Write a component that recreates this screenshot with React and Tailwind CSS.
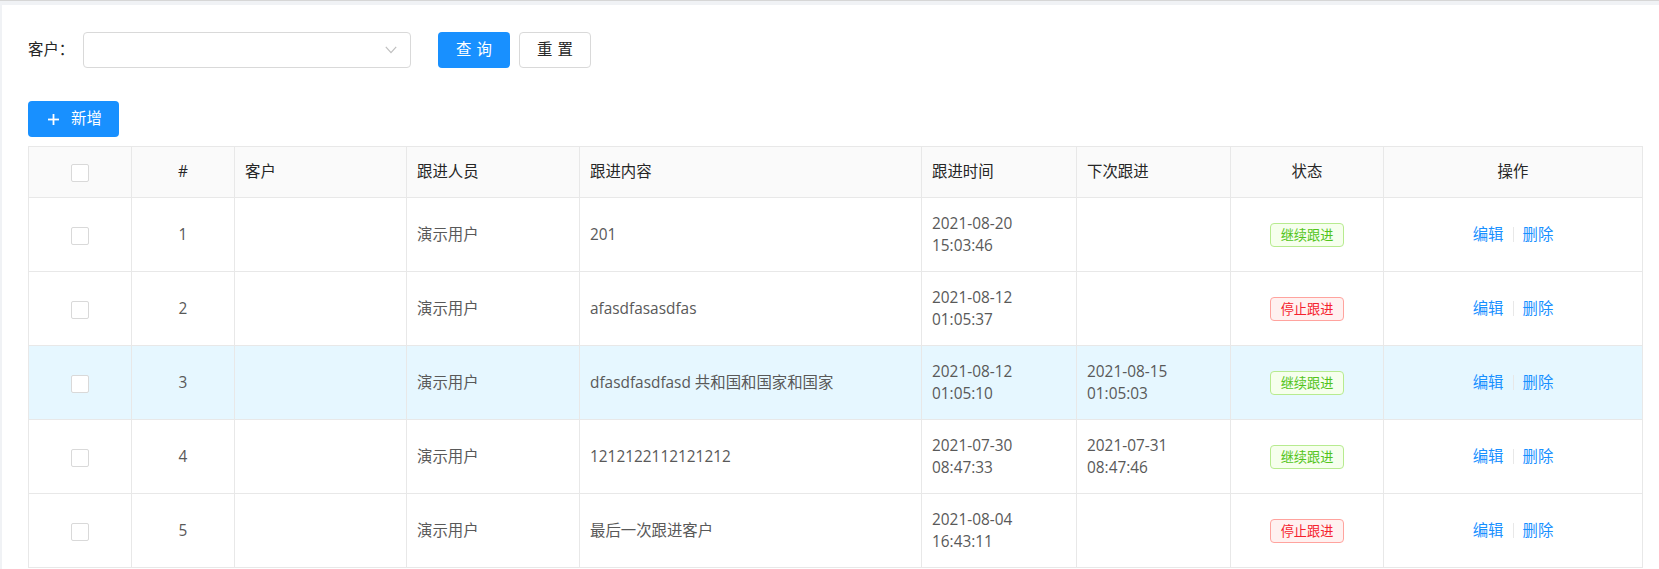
import React from "react";

const rows = [
  { id: 1, user: "演示用户", content: "201", time: ["2021-08-20", "15:03:46"], next: null, stop: false },
  { id: 2, user: "演示用户", content: "afasdfasasdfas", time: ["2021-08-12", "01:05:37"], next: null, stop: true },
  { id: 3, user: "演示用户", content: "dfasdfasdfasd 共和国和国家和国家", time: ["2021-08-12", "01:05:10"], next: ["2021-08-15", "01:05:03"], stop: false, active: true },
  { id: 4, user: "演示用户", content: "1212122112121212", time: ["2021-07-30", "08:47:33"], next: ["2021-07-31", "08:47:46"], stop: false },
  { id: 5, user: "演示用户", content: "最后一次跟进客户", time: ["2021-08-04", "16:43:11"], next: null, stop: true },
];

function Checkbox() {
  return <span className="inline-block w-[18px] h-[18px] rounded-[2px] border border-[#d9d9d9] bg-white align-middle" />;
}

function Tag({ stop }) {
  if (stop) {
    return (
      <span className="inline-block h-[24px] px-[10px] leading-[22px] text-[13.2px] rounded-[4px] border border-[#ffa39e] bg-[#fff1f0] text-[#f5222d]">
        停止跟进
      </span>
    );
  }
  return (
    <span className="inline-block h-[24px] px-[10px] leading-[22px] text-[13.2px] rounded-[4px] border border-[#b7eb8f] bg-[#f6ffed] text-[#52c41a]">
      继续跟进
    </span>
  );
}

export default function App() {
  return (
    <div className="min-h-[569px] bg-[#f0f2f5] border-t border-[#d6d6d6] pt-[4px] pl-[2px] font-['Open_Sans','Noto_Sans_CJK_SC',sans-serif] text-[15.4px]">
      <div className="bg-white pt-[27px] pl-[26px] pr-[17px] min-h-[564px]">
        {/* search bar */}
        <div className="flex items-center">
          <label className="w-[55px] text-[#262626]">客户：</label>
          <div className="relative w-[328px] h-[36px] rounded-[4px] border border-[#d9d9d9] bg-white">
            <svg className="absolute right-[13px] top-[13px]" width="12" height="8" viewBox="0 0 12 8">
              <polyline points="0.8,0.8 6,6.6 11.2,0.8" fill="none" stroke="#bfbfbf" strokeWidth="1.2" />
            </svg>
          </div>
          <button className="ml-[27px] w-[72px] h-[36px] rounded-[4px] bg-[#1890ff] text-white flex items-center justify-center gap-[5px]">
            <span>查</span>
            <span>询</span>
          </button>
          <button className="ml-[9px] w-[72px] h-[36px] rounded-[4px] border border-[#d9d9d9] bg-white text-[#262626] flex items-center justify-center gap-[5px]">
            <span>重</span>
            <span>置</span>
          </button>
        </div>

        {/* toolbar */}
        <div className="mt-[33px]">
          <button className="w-[91px] h-[36px] rounded-[4px] bg-[#1890ff] text-white flex items-center pl-[20px] gap-[12px]">
            <svg width="11" height="11" viewBox="0 0 11 11">
              <rect x="4.6" y="0" width="1.8" height="11" fill="#fff" />
              <rect x="0" y="4.6" width="11" height="1.8" fill="#fff" />
            </svg>
            <span>新增</span>
          </button>
        </div>

        {/* table */}
        <table className="mt-[9px] w-[1614px] table-fixed border-collapse">
          <colgroup>
            <col className="w-[103px]" />
            <col className="w-[103px]" />
            <col className="w-[172px]" />
            <col className="w-[173px]" />
            <col className="w-[342px]" />
            <col className="w-[155px]" />
            <col className="w-[154px]" />
            <col className="w-[153px]" />
            <col className="w-[259px]" />
          </colgroup>
          <thead>
            <tr className="h-[51px] bg-[#fafafa] text-[#262626]">
              <th className="border border-[#e8e8e8] font-normal text-center"><Checkbox /></th>
              <th className="border border-[#e8e8e8] font-normal text-center">#</th>
              <th className="border border-[#e8e8e8] font-normal text-left px-[10px]">客户</th>
              <th className="border border-[#e8e8e8] font-normal text-left px-[10px]">跟进人员</th>
              <th className="border border-[#e8e8e8] font-normal text-left px-[10px]">跟进内容</th>
              <th className="border border-[#e8e8e8] font-normal text-left px-[10px]">跟进时间</th>
              <th className="border border-[#e8e8e8] font-normal text-left px-[10px]">下次跟进</th>
              <th className="border border-[#e8e8e8] font-normal text-center">状态</th>
              <th className="border border-[#e8e8e8] font-normal text-center">操作</th>
            </tr>
          </thead>
          <tbody className="text-[#595959]">
            {rows.map((r) => (
              <tr key={r.id} className={r.active ? "h-[74px] bg-[#e6f7ff]" : "h-[74px] bg-white"}>
                <td className="border border-[#e8e8e8] text-center"><Checkbox /></td>
                <td className="border border-[#e8e8e8] text-center">{r.id}</td>
                <td className="border border-[#e8e8e8] px-[10px]"></td>
                <td className="border border-[#e8e8e8] px-[10px]">{r.user}</td>
                <td className="border border-[#e8e8e8] px-[10px]">{r.content}</td>
                <td className="border border-[#e8e8e8] px-[10px] leading-[22px]">
                  <div>{r.time[0]}</div>
                  <div>{r.time[1]}</div>
                </td>
                <td className="border border-[#e8e8e8] px-[10px] leading-[22px]">
                  {r.next && (
                    <>
                      <div>{r.next[0]}</div>
                      <div>{r.next[1]}</div>
                    </>
                  )}
                </td>
                <td className="border border-[#e8e8e8] text-center"><Tag stop={r.stop} /></td>
                <td className="border border-[#e8e8e8] text-center">
                  <div className="flex items-center justify-center text-[#1890ff]">
                    <span>编辑</span>
                    <span className="mx-[9px] w-px h-[15px] bg-[#e8e8e8]" />
                    <span>删除</span>
                  </div>
                </td>
              </tr>
            ))}
          </tbody>
        </table>
      </div>
    </div>
  );
}
